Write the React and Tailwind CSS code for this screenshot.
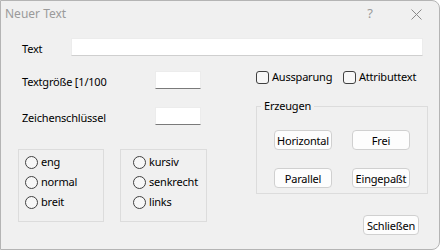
import React from 'react';

const font = { fontFamily: '"Noto Sans", "Liberation Sans", sans-serif' };

const Radio = ({ label }) => (
  <div className="flex items-center h-[20px]">
    <span className="w-[13px] h-[13px] rounded-full border border-[#404040] bg-[#f7f7f7]" />
    <span className="ml-[3px]">{label}</span>
  </div>
);

const Checkbox = ({ label, className }) => (
  <div className={`flex items-center h-[14px] ${className || ''}`}>
    <span className="w-[13px] h-[13px] rounded-[3px] border border-[#404040] bg-[#f7f7f7]" />
    <span className="ml-[3px]">{label}</span>
  </div>
);

const Button = ({ children, className }) => (
  <button className={`h-[20px] rounded-[4px] border border-[#d0d0d0] bg-[#fdfdfd] text-[11px] tracking-[-0.2px] leading-none text-black ${className || ''}`}>
    {children}
  </button>
);

export default function App() {
  return (
    <div
      className="w-[440px] h-[250px] bg-[#f0f0f0] border border-[#b4b4b4] rounded-r-[8px] text-[11px] tracking-[-0.2px] text-black overflow-hidden"
      style={font}
    >
      {/* Title bar */}
      <div className="h-[29px] flex items-center pb-[3px] text-[#9a9a9a] text-[12px] tracking-normal">
        <span className="ml-[4px]">Neuer Text</span>
        <span className="ml-auto mr-[38px] text-[13px]">?</span>
        <svg className="mr-[17px]" width="11" height="11" viewBox="0 0 11 11">
          <path d="M0.5 0.5 L10.5 10.5 M10.5 0.5 L0.5 10.5" stroke="#8a8a8a" strokeWidth="1" />
        </svg>
      </div>

      {/* Text row */}
      <div className="mt-[8px] flex items-center h-[18px]">
        <span className="ml-[21px] w-[49px] translate-y-[2px]">Text</span>
        <div className="w-[352px] h-[18px] bg-white border border-[#ececec] border-b-[#cfcfcf]" />
      </div>

      <div className="flex">
        {/* Left column */}
        <div className="ml-[17px] w-[190px] mt-[15px]">
          <div className="flex items-center h-[18px] pl-[4px]">
            <span className="w-[133px] translate-y-[2px]">Textgröße [1/100</span>
            <div className="w-[46px] h-[18px] bg-white border border-[#ececec] border-b-[#7a7a7a]" />
          </div>
          <div className="flex items-center h-[18px] pl-[4px] mt-[18px]">
            <span className="w-[133px] translate-y-[2px]">Zeichenschlüssel</span>
            <div className="w-[46px] h-[18px] bg-white border border-[#ececec] border-b-[#7a7a7a]" />
          </div>
          <div className="flex gap-[16px] mt-[24px]">
            <div className="w-[86px] h-[73px] border border-[#dcdcdc] pt-[2px] pl-[6px]">
              <Radio label="eng" />
              <Radio label="normal" />
              <Radio label="breit" />
            </div>
            <div className="w-[87px] h-[73px] border border-[#dcdcdc] pt-[2px] pl-[12px]">
              <Radio label="kursiv" />
              <Radio label="senkrecht" />
              <Radio label="links" />
            </div>
          </div>
        </div>

        {/* Right column */}
        <div className="ml-[48px] w-[172px] mt-[14px]">
          <div className="flex">
            <Checkbox label="Aussparung" className="w-[87px]" />
            <Checkbox label="Attributtext" />
          </div>
          <fieldset className="mt-[14px] h-[96px] border border-[#dcdcdc]">
            <legend className="ml-[4px] px-[3px] leading-[16px]">Erzeugen</legend>
            <div className="pl-[17px]">
              <div className="flex gap-[20px] mt-[16px]">
                <Button className="w-[58px]">Horizontal</Button>
                <Button className="w-[58px]">Frei</Button>
              </div>
              <div className="flex gap-[20px] mt-[18px]">
                <Button className="w-[58px]">Parallel</Button>
                <Button className="w-[58px]">Eingepaßt</Button>
              </div>
            </div>
          </fieldset>
          <div className="flex justify-end mt-[21px] mr-[9px]">
            <Button className="w-[56px]">Schließen</Button>
          </div>
        </div>
      </div>
    </div>
  );
}
